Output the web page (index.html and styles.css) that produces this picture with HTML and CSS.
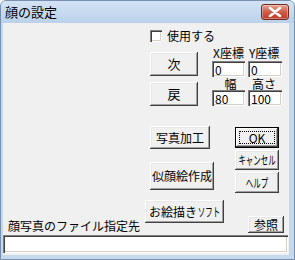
FILE: index.html
```html
<!DOCTYPE html>
<html>
<head lang="ja">
    <meta charset="UTF-8">
    <title>顔の設定</title>
    <link rel="stylesheet" href="styles.css">
</head>
<body>
<div class="window">
    <div class="titlebar">
        <span class="title">顔の設定</span>
        <a href="javascript:;" class="close">
            <svg width="14" height="10" viewBox="0 0 14 10">
                <path d="M2 1 L12 9 M12 1 L2 9" stroke="#fff" stroke-width="2.6" stroke-linecap="round"/>
            </svg>
        </a>
    </div>
    <div class="client">
        <div class="opts">
            <label class="check"><span class="box"></span>使用する</label>
            <div class="navrow">
                <div class="navbtns">
                    <button class="btn nav">次</button>
                    <button class="btn nav">戻</button>
                </div>
                <div class="coords">
                    <span class="lbl">X座標</span>
                    <span class="lbl">Y座標</span>
                    <input class="field" type="text" value="0">
                    <input class="field" type="text" value="0">
                    <span class="lbl center">幅</span>
                    <span class="lbl indent">高さ</span>
                    <input class="field" type="text" value="80">
                    <input class="field" type="text" value="100">
                </div>
            </div>
        </div>
        <div class="actions">
            <div class="leftcol">
                <button class="btn photo">写真加工</button>
                <button class="btn portrait">似顔絵作成</button>
                <button class="btn paint">お絵描き<span class="narrow">ソフト</span></button>
            </div>
            <div class="rightcol">
                <button class="btn side default">OK</button>
                <button class="btn side cancel"><span class="narrow">キャンセル</span></button>
                <button class="btn side"><span class="narrow">ヘルプ</span></button>
            </div>
        </div>
        <div class="filerow">
            <span class="filelabel">顔写真のファイル指定先</span>
            <button class="btn browse">参照</button>
        </div>
        <input class="field path" type="text" value="">
    </div>
</div>
</body>
</html>
```
FILE: styles.css
```css
* {
    margin: 0;
    padding: 0;
    box-sizing: border-box;
}

body {
    font-size: 12px;
    font-family: "Noto Sans CJK JP", sans-serif;
    background: #fff;
}

.window {
    width: 295px;
    height: 260px;
    display: flex;
    flex-direction: column;
    background: #c4d8ee;
    border: 1px solid #7890ad;
    border-radius: 6px 6px 0 0;
}

.titlebar {
    height: 22px;
    display: flex;
    align-items: center;
    justify-content: space-between;
    padding: 0 5px 0 4px;
    background: linear-gradient(#d3e3f5, #bad1ea);
    border-radius: 5px 5px 0 0;
}

.title {
    font-size: 13px;
    line-height: 16px;
    color: #000;
}

.close {
    width: 28px;
    height: 16px;
    display: flex;
    align-items: center;
    justify-content: center;
    border: 1px solid #6e2b22;
    border-radius: 3px;
    background: linear-gradient(#e7a594, #cf5b48 50%, #c03a26);
    box-shadow: inset 0 0 0 1px rgba(255, 255, 255, 0.35);
}

.client {
    flex: 1;
    margin: 0 5px 4px 2px;
    background: #f0f0f0;
    display: flex;
    flex-direction: column;
}

.opts {
    padding: 6px 0 0 147px;
}

.check {
    display: flex;
    align-items: center;
    gap: 5px;
    height: 14px;
    line-height: 14px;
}

.check .box {
    width: 12px;
    height: 12px;
    background: #fff;
    box-shadow: inset 1px 1px #808080, inset 2px 2px #404040, inset -1px -1px #fff, inset -2px -2px #d4d0c8;
}

.navrow {
    display: flex;
    margin-top: 3px;
}

.navbtns {
    display: flex;
    flex-direction: column;
    gap: 6px;
    padding-top: 6px;
    width: 48px;
}

.coords {
    margin-left: 14px;
    display: grid;
    grid-template-columns: 33px 34px;
    grid-template-rows: 15px 16px 13px 16px;
    column-gap: 3px;
}

.lbl {
    line-height: 13px;
    padding-left: 1px;
    white-space: nowrap;
}

.lbl.center {
    text-align: center;
    padding-left: 4px;
}

.lbl.indent {
    padding-left: 4px;
}

.btn {
    display: flex;
    align-items: center;
    justify-content: center;
    border: none;
    background: #f0f0f0;
    font-family: inherit;
    font-size: 12px;
    color: #000;
    line-height: 14px;
    white-space: nowrap;
    position: relative;
    box-shadow: inset -1px -1px #404040, inset 1px 1px #fff, inset -2px -2px #a0a0a0, inset 2px 2px #e8e8e8;
}

/* narrow katakana, like the half-width glyphs of the original */
.narrow {
    display: inline-block;
    transform: scaleX(0.62);
}

.btn.paint .narrow {
    margin: 0 -7px 0 -6px;
}

.btn.nav {
    height: 24px;
    width: 48px;
    font-size: 13px;
}

.field {
    border: none;
    outline: none;
    background: #fff;
    font-family: inherit;
    font-size: 12px;
    line-height: 14px;
    padding: 1px 0 0 3px;
    width: 100%;
    height: 16px;
    color: #000;
    box-shadow: inset 1px 1px #808080, inset 2px 2px #404040, inset -1px -1px #fff, inset -2px -2px #d4d0c8;
}

.actions {
    display: flex;
    padding-left: 142px;
    margin-top: 20px;
}

.leftcol {
    display: flex;
    flex-direction: column;
    align-items: flex-start;
}

.btn.photo {
    margin-left: 5px;
    width: 60px;
    height: 23px;
}

.btn.portrait {
    margin: 13px 0 0 5px;
    width: 64px;
    height: 28px;
}

.btn.paint {
    margin-top: 10px;
    width: 79px;
    height: 23px;
}

.rightcol {
    display: flex;
    flex-direction: column;
    gap: 2px;
    margin: 1px 0 0 11px;
}

.btn.side {
    width: 44px;
    height: 21px;
}

.btn.side.cancel {
    height: 20px;
}

.btn.default {
    box-shadow: inset 0 0 0 1px #000, inset -2px -2px #404040, inset 2px 2px #fff, inset -3px -3px #a0a0a0;
}

.btn.default::after {
    content: "";
    position: absolute;
    top: 4px;
    left: 4px;
    right: 4px;
    bottom: 4px;
    border: 1px dotted #000;
}

.filerow {
    display: flex;
    align-items: flex-end;
    justify-content: space-between;
    padding: 0 5px 0 5px;
    margin-top: -7px;
}

.filelabel {
    line-height: 15px;
}

.btn.browse {
    width: 36px;
    height: 17px;
}

.field.path {
    margin-top: 2px;
    width: auto;
    margin-right: 1px;
    height: 18px;
}
```
